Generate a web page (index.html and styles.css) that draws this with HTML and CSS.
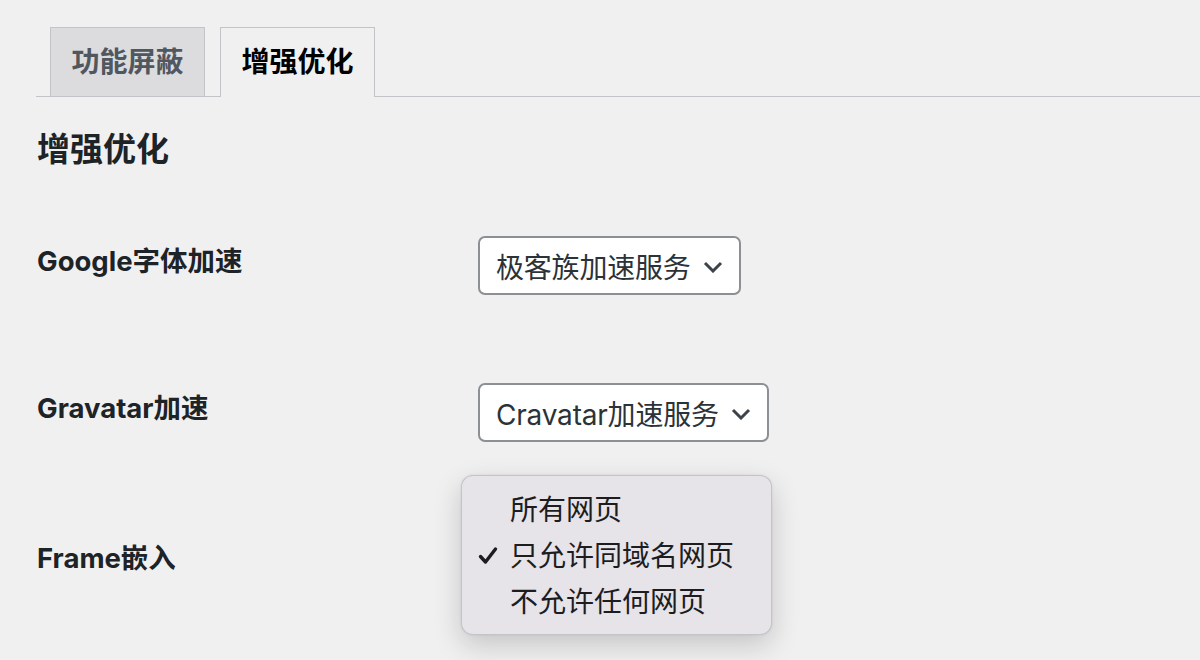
FILE: index.html
```html
<!DOCTYPE html>
<html lang="zh-CN">
<head>
    <meta charset="UTF-8">
    <meta name="viewport" content="width=device-width, initial-scale=1.0">
    <title>增强优化</title>
    <link rel="stylesheet" href="styles.css">
</head>
<body>
    <div class="wrap">
        <nav class="tabs">
            <a class="tab">功能屏蔽</a>
            <a class="tab active">增强优化</a>
        </nav>
        <h2 class="title">增强优化</h2>
        <div class="form">
            <div class="row">
                <div class="label">Google字体加速</div>
                <div class="field">
                    <div class="select">极客族加速服务
                        <svg class="chevron" viewBox="0 0 20 12" width="20" height="12"><path d="M2 2 L10 10 L18 2" fill="none" stroke="#3c434a" stroke-width="3"/></svg>
                    </div>
                </div>
            </div>
            <div class="row">
                <div class="label">Gravatar加速</div>
                <div class="field">
                    <div class="select">Cravatar加速服务
                        <svg class="chevron" viewBox="0 0 20 12" width="20" height="12"><path d="M2 2 L10 10 L18 2" fill="none" stroke="#3c434a" stroke-width="3"/></svg>
                    </div>
                </div>
            </div>
            <div class="row">
                <div class="label">Frame嵌入</div>
                <div class="field">
                    <div class="select hidden">只允许同域名网页
                        <svg class="chevron" viewBox="0 0 20 12" width="20" height="12"><path d="M2 2 L10 10 L18 2" fill="none" stroke="#3c434a" stroke-width="3"/></svg>
                    </div>
                    <ul class="menu">
                        <li>所有网页</li>
                        <li class="checked">
                            <svg class="check" viewBox="0 0 20 20" width="20" height="20"><path d="M2.5 10.5 L7.5 16 L17.5 3" fill="none" stroke="#1d1d1f" stroke-width="3.4" stroke-linecap="round" stroke-linejoin="round"/></svg>
                            只允许同域名网页
                        </li>
                        <li>不允许任何网页</li>
                    </ul>
                </div>
            </div>
        </div>
    </div>
</body>
</html>
```

FILE: styles.css
```css
* {
    margin: 0;
    padding: 0;
    box-sizing: border-box;
}
body {
    background: #f0f0f1;
    color: #1d2327;
    font-family: Inter, "Noto Sans CJK SC", sans-serif;
    overflow: hidden;
    height: 660px;
}
.wrap {
    padding: 27px 0 0 36px;
}
.tabs {
    display: flex;
    border-bottom: 1px solid #c3c4c7;
    padding-left: 14px;
    gap: 15px;
}
.tab {
    display: block;
    width: 155px;
    text-align: center;
    padding: 10px 0;
    font-size: 28px;
    line-height: 48px;
    font-weight: 700;
    color: #50575e;
    background: #dcdcde;
    border: 1px solid #c3c4c7;
    border-bottom: none;
}
.tab.active {
    background: #f0f0f1;
    color: #000;
    margin-bottom: -1px;
    padding-bottom: 11px;
}
.title {
    font-size: 33px;
    line-height: 40px;
    font-weight: 700;
    color: #1d2327;
    margin-top: 32px;
    padding-left: 1px;
}
.form {
    margin-top: 67px;
    display: flex;
    flex-direction: column;
    gap: 88px;
}
.row {
    display: flex;
    align-items: flex-start;
}
.label {
    width: 442px;
    padding-top: 5px;
    padding-left: 1px;
    font-size: 27.5px;
    line-height: 40px;
    font-weight: 700;
    color: #1d2327;
}
.row:last-child .label {
    padding-top: 8px;
}
.field {
    position: relative;
}
.select {
    display: inline-flex;
    align-items: center;
    height: 59px;
    padding: 0 16px 0 16px;
    gap: 12px;
    background: #fff;
    border: 2px solid #8c8f94;
    border-radius: 7px;
    font-size: 28px;
    letter-spacing: -0.2px;
    color: #2c3338;
}
.select.hidden {
    visibility: hidden;
}
.chevron {
    margin-top: 2px;
}
.menu {
    position: absolute;
    left: -17px;
    top: -55px;
    width: 311px;
    list-style: none;
    padding: 11px 0 9px;
    background: #e6e3e9;
    border: 1px solid rgba(0, 0, 0, 0.14);
    border-radius: 12px;
    box-shadow: 0 10px 28px rgba(0, 0, 0, 0.18), 0 0 3px rgba(0, 0, 0, 0.08);
}
.menu li {
    position: relative;
    padding-left: 48px;
    font-size: 28px;
    line-height: 46px;
    color: #1d1d1f;
}
.check {
    position: absolute;
    left: 16px;
    top: 13px;
}
```
